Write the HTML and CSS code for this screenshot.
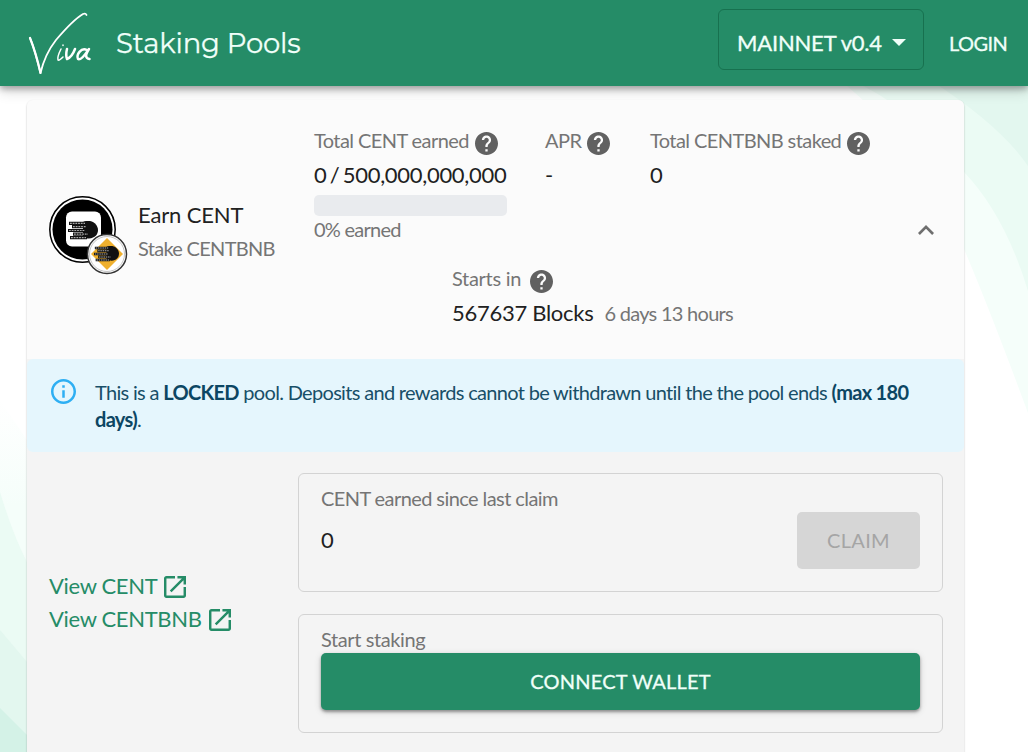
FILE: index.html
```html
<!DOCTYPE html>
<html lang="en">
<head>
<meta charset="utf-8">
<title>Staking Pools</title>
<link rel="stylesheet" href="styles.css">
</head>
<body>
<svg width="0" height="0" class="defs" aria-hidden="true">
  <symbol id="help" viewBox="2 2 20 20"><path d="M12 2C6.48 2 2 6.48 2 12s4.48 10 10 10 10-4.480 10-10S17.520 2 12 2zm1 17h-2v-2h2v2zm2.070-7.750l-.9.920C13.450 12.900 13 13.500 13 15h-2v-.5c0-1.100.450-2.100 1.170-2.830l1.240-1.260c.370-.360.590-.860.590-1.410 0-1.100-.9-2-2-2s-2 .9-2 2H8c0-2.210 1.790-4 4-4s4 1.790 4 4c0 .880-.360 1.680-.930 2.250z"/></symbol>
  <symbol id="launch" viewBox="3 3 18 18"><path d="M19 19H5V5h7V3H5c-1.110 0-2 .9-2 2v14c0 1.100.890 2 2 2h14c1.100 0 2-.9 2-2v-7h-2v7zM14 3v2h3.590l-9.830 9.830 1.410 1.410L19 6.410V10h2V3h-7z"/></symbol>
  <symbol id="stack" viewBox="0 0 30 20" preserveAspectRatio="none"><path d="M15 1C24-3 30 4 30 9.500S25 21 15 17z" fill="#111"/><path d="M1 2.500h17M4 6h15M0 10h18M5 13.700h16M2 17.500h17" stroke="#111" stroke-width="3.400"/><path d="M2 2.500h15M5 6h13M1 10h16M6 13.700h14M3 17.500h15" stroke="#aaa" stroke-width="1.300" stroke-dasharray="1.800 .9"/></symbol>
</svg>
<svg class="backdrop" viewBox="0 0 1028 752" aria-hidden="true">
  <defs><linearGradient id="fade" x1="0" y1="0" x2="0" y2="1"><stop offset="0" stop-color="#fff"/><stop offset=".3" stop-color="#f5fefa"/></linearGradient></defs>
  <path d="M840 80H1028V413Q990 310 964 249Q920 145 840 80Z" fill="#f5fefa"/>
  <path d="M850 80H1028V291Q1005 215 964 172Q910 105 850 80Z" fill="#ebfbf4"/>
  <path d="M930 80H1028V166Q1000 125 930 80Z" fill="#e3f7ef"/>
  <path d="M0 400L27 440V752H0Z" fill="url(#fade)"/>
  <path d="M0 492Q13 535 27 562V752H0Z" fill="#ebfbf4"/>
  <path d="M0 630L27 662V752H0Z" fill="#e3f7ef"/>
  <path d="M0 708L27 735V752H0Z" fill="#d4f2e7"/>
</svg>
<header class="topbar">
  <svg class="logo" viewBox="0 0 66 66" fill="none" stroke="#fff" stroke-linecap="round" stroke-linejoin="round">
    <path d="M3 27Q7 36 13.500 62Q18 43 29 29Q46 9 56 3Q59 2 59.500 4" stroke-width="1.800"/>
    <path d="M3 27Q9 42 13.500 62" stroke-width="2.200"/>
    <path d="M34 38Q30 46 31 49Q32 50 36 46M36 34v.5" stroke-width="1.500"/>
    <path d="M40 38Q38.500 44 40 48Q45 46 48 38M60 39C54 36 49 44 51 48C54 50 60 41 62 38Q56 47 62.500 48" stroke-width="2.500"/>
  </svg>
  <h1 class="title">Staking Pools</h1>
  <button class="network">MAINNET v0.4<svg class="caret" viewBox="0 0 14 7"><path d="M0 0h14L7 7z" fill="currentColor"/></svg></button>
  <a class="login">LOGIN</a>
</header>
<main class="card">
  <section class="summary">
    <div class="tokens">
      <svg class="coins" viewBox="0 0 80 80">
        <circle cx="33.500" cy="34.500" r="32.700" fill="#fff" stroke="#000" stroke-width="1.500"/><circle cx="33.500" cy="34.500" r="30"/>
        <rect x="17" y="16.500" width="35" height="35" rx="6" fill="#fff"/>
        <use href="#stack" x="19" y="26" width="30" height="19"/>
        <circle cx="58" cy="59" r="19.500" fill="#fff" stroke="#333" stroke-width="1.500"/><circle cx="58" cy="59" r="17.500" fill="#fff" stroke="#aaa" stroke-width=".7"/>
        <path d="M58 43L74 59L58 75L42 59z" fill="#efb02e"/>
        <use href="#stack" x="45" y="51" width="25" height="16"/>
      </svg>
      <div class="names"><div class="earn">Earn CENT</div><div class="stake">Stake CENTBNB</div></div>
    </div>
    <div class="stats">
      <div class="stat earned">
        <div class="label"><span>Total CENT earned</span><svg class="help"><use href="#help"/></svg></div>
        <div class="value total">0 / 500,000,000,000</div>
        <div class="progress"></div>
        <div class="percent">0% earned</div>
      </div>
      <div class="stat apr">
        <div class="label"><span>APR</span><svg class="help"><use href="#help"/></svg></div>
        <div class="value">-</div>
      </div>
      <div class="stat">
        <div class="label"><span>Total CENTBNB staked</span><svg class="help"><use href="#help"/></svg></div>
        <div class="value">0</div>
      </div>
      <div class="stat starts">
        <div class="label wide"><span>Starts in</span><svg class="help"><use href="#help"/></svg></div>
        <div class="value"><span class="blocks">567637 Blocks</span><span class="eta">6 days 13 hours</span></div>
      </div>
    </div>
    <svg class="chevron" viewBox="6 8 12 7.410"><path d="M12 8l-6 6 1.410 1.410L12 10.830l4.590 4.580L18 14z" fill="#6f6f6f"/></svg>
  </section>
  <section class="alert">
    <svg class="info" viewBox="2 2 20 20"><path d="M11 7h2v2h-2zM11 11h2v6h-2zM12 2C6.480 2 2 6.480 2 12s4.480 10 10 10 10-4.480 10-10S17.520 2 12 2zm0 18c-4.410 0-8-3.590-8-8s3.590-8 8-8 8 3.590 8 8-3.590 8-8 8z" fill="#2eaff3"/></svg>
    <p class="message">This is a <b>LOCKED</b> pool. Deposits and rewards cannot be withdrawn until the the pool ends <b>(max 180 days)</b>.</p>
  </section>
  <section class="details">
    <nav class="links">
      <a><span>View CENT</span><svg class="launch"><use href="#launch"/></svg></a>
      <a><span>View CENTBNB</span><svg class="launch"><use href="#launch"/></svg></a>
    </nav>
    <div class="panels">
      <div class="panel">
        <div class="caption claim-caption">CENT earned since last claim</div>
        <div class="claim-row"><span class="amount">0</span><button class="claim" disabled>CLAIM</button></div>
      </div>
      <div class="panel">
        <div class="caption start-caption">Start staking</div>
        <button class="connect">CONNECT WALLET</button>
      </div>
    </div>
  </section>
</main>
</body>
</html>
```

FILE: styles.css
```css
* { box-sizing: border-box; }
body { margin: 0; width: 1028px; height: 752px; overflow: hidden; background: #fff; color: #212121; font-family: Lato, "Liberation Sans", sans-serif; }
button { font-family: inherit; }
.defs { position: absolute; }
.backdrop { position: absolute; inset: 0; width: 1028px; height: 752px; z-index: -1; }
.topbar { display: flex; align-items: center; height: 86px; padding: 0 21px 0 27px; background: #258c67; color: #f0fff9; box-shadow: 0 3px 6px rgba(0,0,0,.28), 0 5px 13px rgba(0,0,0,.16); }
.logo { width: 66px; height: 66px; margin-top: 2px; }
.title { margin: 0 auto 0 23px; font: 400 27.500px/40px Montserrat, Inter, sans-serif; letter-spacing: -.18px; white-space: nowrap; -webkit-text-stroke: .25px; }
.network { display: flex; align-items: center; justify-content: center; width: 206px; height: 61px; margin: -7px 25px 0 0; padding: 6px 0 0 1px; border: 1px solid #17714f; border-radius: 6px; background: none; color: inherit; font-size: 22px; letter-spacing: -.2px; white-space: nowrap; -webkit-text-stroke: .3px; }
.caret { width: 14px; height: 7px; margin-left: 10px; }
.login { width: 58px; font-size: 20px; letter-spacing: -.6px; white-space: nowrap; -webkit-text-stroke: .3px; }
.card { width: 937px; height: 670px; margin: 14px 0 0 27px; border-radius: 6px; background: #f4f4f4; box-shadow: 0 1px 2px rgba(0,0,0,.28); overflow: hidden; }
.summary { display: flex; align-items: center; height: 259px; padding: 0 30px 0 22px; background: #fbfbfb; }
.tokens { display: flex; width: 265px; gap: 9px; margin-top: 11px; }
.coins { width: 80px; height: 80px; }
.names { padding-top: 3px; white-space: nowrap; }
.earn { font-size: 22px; line-height: 33px; letter-spacing: -.15px; }
.stake { font-size: 20px; line-height: 34px; letter-spacing: -.7px; color: #757575; }
.stats { display: grid; grid-template-columns: 231px 105px 1fr; flex: 1; align-self: flex-start; padding-top: 27px; }
.label { display: flex; align-items: center; gap: 6px; height: 31px; font-size: 20px; line-height: 27px; letter-spacing: -.58px; color: #757575; white-space: nowrap; }
.label span { padding-bottom: 5px; }
.label.wide { gap: 9px; letter-spacing: -.3px; }
.help { width: 23px; height: 23px; margin-top: 2px; fill: #616161; }
.value { height: 35px; line-height: 33px; font-size: 22px; white-space: nowrap; }
.total { letter-spacing: -.3px; word-spacing: -2px; }
.progress { width: 193px; height: 21px; margin: 2px 0; border-radius: 5px; background: #e9ebee; }
.percent { height: 26px; font-size: 20px; line-height: 23px; letter-spacing: -.75px; color: #757575; }
.starts { grid-column: 1 / -1; padding: 21px 0 0 138px; }
.blocks { letter-spacing: -.28px; }
.eta { margin-left: 11px; font-size: 20px; letter-spacing: -.72px; color: #757575; }
.chevron { width: 16px; height: 10px; }
.alert { display: flex; height: 93px; padding: 20px 22px 0 24px; border-radius: 6px; background: #e5f6fd; }
.info { flex: none; width: 25px; height: 25px; }
.message { margin: 0 0 0 19px; font-size: 20px; line-height: 27px; letter-spacing: -.68px; color: #184f68; }
.message b { font-weight: 700; color: #0c4663; }
.details { display: flex; padding: 21px 21px 0 22px; }
.links { display: flex; flex-direction: column; justify-content: center; width: 249px; }
.links a { display: flex; align-items: center; gap: 7px; height: 33px; font-size: 22px; letter-spacing: -.33px; color: #258c67; white-space: nowrap; }
.links span { padding-bottom: 2px; }
.launch { width: 22px; height: 22px; fill: #258c67; }
.panels { display: grid; gap: 22px; flex: 1; }
.panel { height: 119px; padding: 11px 22px 0; border: 1px solid #d3d3d3; border-radius: 6px; }
.caption { height: 28px; font-size: 20px; line-height: 27px; color: #757575; }
.claim-caption { height: 27px; letter-spacing: -.58px; }
.start-caption { letter-spacing: -.4px; }
.claim-row { display: flex; justify-content: space-between; align-items: center; height: 57px; }
.amount { padding-bottom: 2px; font-size: 22px; }
.claim { width: 123px; height: 57px; padding: 0 0 2px; border: 0; border-radius: 5px; background: #d6d6d6; color: #a5a5a5; font-size: 20px; letter-spacing: .3px; }
.connect { display: block; width: 100%; height: 57px; margin-top: -1px; padding: 0 0 2px; border: 0; border-radius: 5px; background: #258c67; color: #f0fff9; font-size: 20px; letter-spacing: .2px; -webkit-text-stroke: .3px; box-shadow: 0 2px 3px rgba(0,0,0,.35), 0 2px 7px rgba(0,0,0,.15); }
```
